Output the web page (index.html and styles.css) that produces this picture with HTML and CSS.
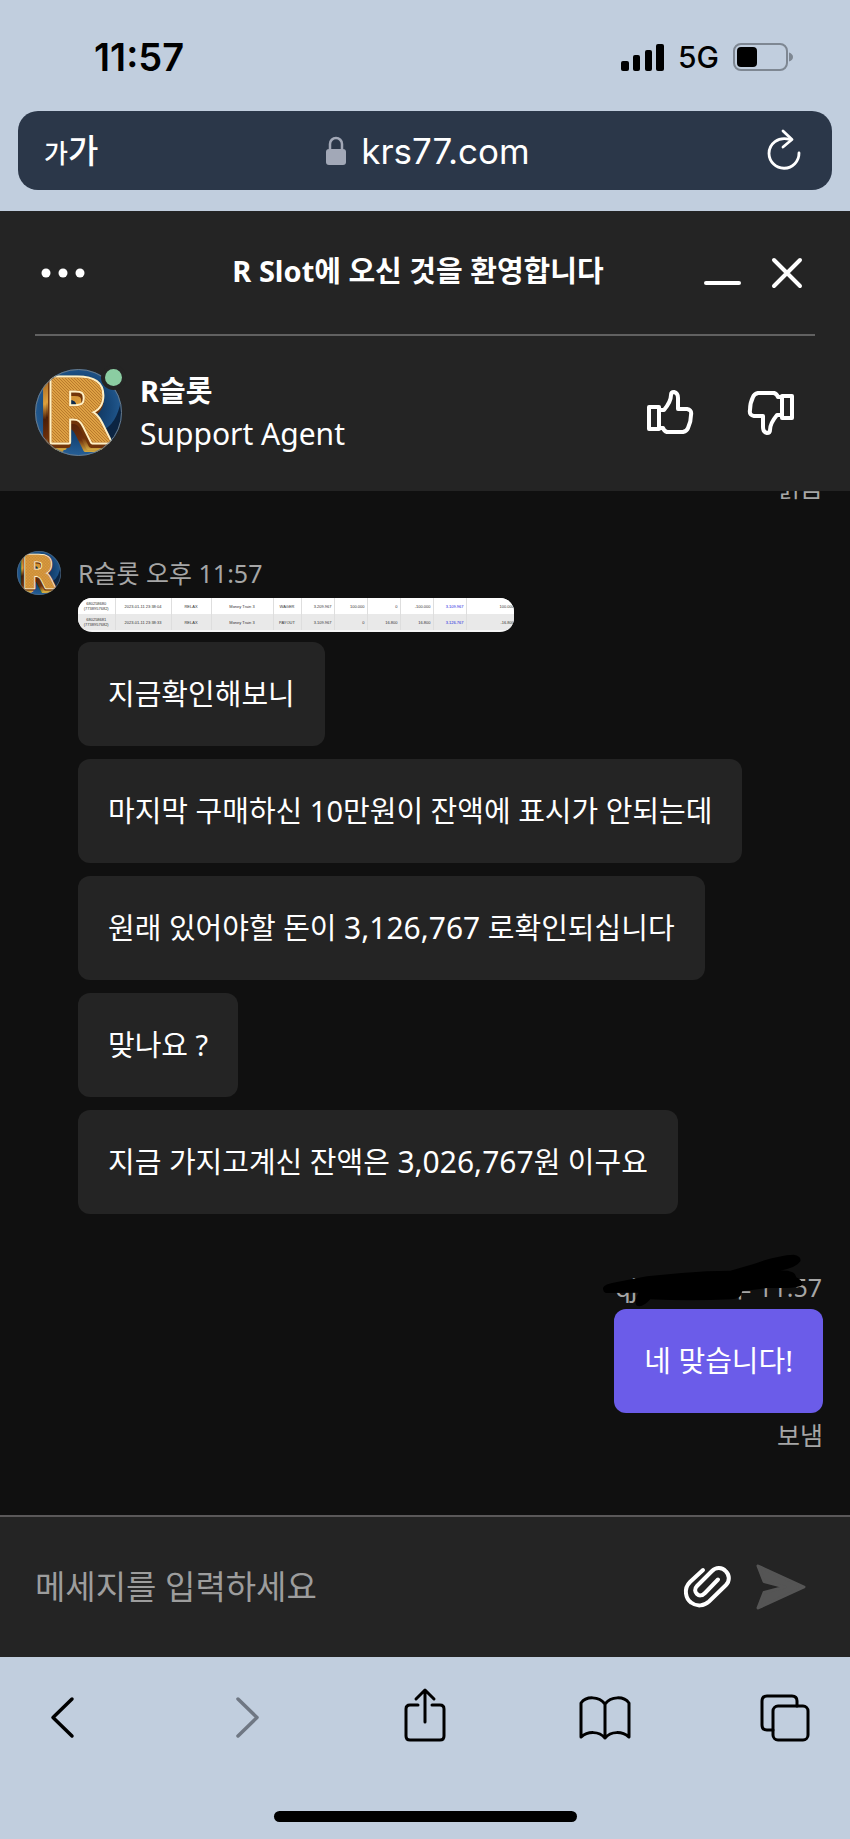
FILE: index.html
```html
<!DOCTYPE html>
<html lang="ko">
<head>
<meta charset="utf-8">
<meta name="viewport" content="width=device-width, initial-scale=1">
<title>R Slot</title>
<link rel="stylesheet" href="styles.css">
</head>
<body>
<svg class="defs" width="0" height="0" aria-hidden="true">
  <defs>
    <radialGradient id="sky" cx="50%" cy="45%" r="60%"><stop offset="0" stop-color="#0b2340"/><stop offset=".6" stop-color="#174778"/><stop offset="1" stop-color="#2a66a0"/></radialGradient>
    <linearGradient id="side" x1="0" y1="0" x2="0" y2="1"><stop offset="0" stop-color="#8a4a14"/><stop offset=".35" stop-color="#dfa03c"/><stop offset=".5" stop-color="#4a1e08"/><stop offset=".7" stop-color="#6e300c"/><stop offset=".85" stop-color="#f2cf52"/><stop offset="1" stop-color="#8a5212"/></linearGradient>
    <pattern id="mesh" width="3" height="3" patternUnits="userSpaceOnUse"><rect width="3" height="3" fill="#dda043"/><path d="M0 0L3 3" stroke="#b97a2c" stroke-width="1"/></pattern>
    <clipPath id="disc"><circle cx="43.5" cy="43.5" r="43.5"/></clipPath>
    <symbol id="logo" viewBox="0 0 87 87">
      <g clip-path="url(#disc)">
        <rect width="87" height="87" fill="url(#sky)"/>
        <path d="M64 87L87 87V24Q84 52 70 60Z" fill="#0b2442"/>
        <g class="logo-letter">
          <text x="2" y="81" fill="url(#side)" stroke="url(#side)" stroke-width="4">R</text>
          <text x="5" y="79" fill="url(#side)" stroke="url(#side)" stroke-width="4">R</text>
          <text x="8" y="76" fill="#713409" stroke="#713409" stroke-width="6">R</text>
          <text x="9" y="73" fill="#fff0c4" stroke="#fff0c4" stroke-width="5">R</text>
          <text x="9" y="73" fill="url(#mesh)" stroke="#b87324" stroke-width="1">R</text>
        </g>
      </g>
      <circle cx="43.5" cy="43.5" r="43" fill="none" stroke="#6a7a88" stroke-width="1"/>
    </symbol>
    <symbol id="thumb" viewBox="0 0 47 45">
      <g fill="none" stroke="#fff" stroke-width="4" stroke-linejoin="round" stroke-linecap="round">
        <path d="M2 17H12V39H2Z"/>
        <path d="M13 20H17C22 14 24 10 24 5Q24 2 27 2Q31 3 31 8V19H40Q45 20 44 25Q44 32 41 38Q40 41 36 42H20Q17 41 16 38H13"/>
      </g>
    </symbol>
  </defs>
</svg>

<header class="phone-top">
  <div class="status">
    <time class="clock">11:57</time>
    <div class="signals">
      <svg width="43" height="27" viewBox="0 0 43 27" role="img" aria-label="신호"><rect y="17" width="8" height="10" rx="2"/><rect x="12" y="11" width="7" height="16" rx="2"/><rect x="24" y="6" width="7" height="21" rx="2"/><rect x="35" width="8" height="27" rx="2"/></svg>
      <span class="network">5G</span>
      <svg width="60" height="28" viewBox="0 0 60 28" role="img" aria-label="배터리"><rect x="1" y="1" width="53" height="26" rx="7" fill="none" stroke="#7e8792" stroke-width="2"/><rect x="4" y="4" width="20" height="20" rx="4"/><path d="M56 9.500Q60 11 60 14T56 18.500Z" fill="#7e8792"/></svg>
    </div>
  </div>
  <div class="address">
    <button class="text-size" aria-label="글자 크기"><span class="small-ga">가</span><span class="big-ga">가</span></button>
    <a class="site" href="#"><svg width="20" height="28" viewBox="0 0 20 28"><path d="M4 12V7A6 6 0 0 1 16 7V12" fill="none" stroke="#a2a8b7" stroke-width="2.500"/><rect y="12" width="20" height="16" rx="3" fill="#a2a8b7"/></svg>krs77.com</a>
    <button class="reload" aria-label="새로고침"><svg width="34" height="40" viewBox="0 0 34 40" fill="none" stroke="#fff" stroke-width="2.800" stroke-linecap="round" stroke-linejoin="round"><path d="M23 8.500C11 5 2 13 2 22.500A15 15 0 0 0 32 22"/><path d="M16 0L25 8.500L16 16"/></svg></button>
  </div>
</header>

<main class="chat">
  <section class="chat-head">
    <div class="title-bar">
      <button class="menu" aria-label="메뉴"><svg width="56" height="12" viewBox="0 0 56 12" fill="#fff"><circle cx="11" cy="6" r="4.500"/><circle cx="28" cy="6" r="4.500"/><circle cx="45" cy="6" r="4.500"/></svg></button>
      <h1>R Slot에 오신 것을 환영합니다</h1>
      <div class="window-buttons">
        <button aria-label="최소화"><svg width="38" height="32" viewBox="0 0 38 32" stroke="#fff" stroke-width="4" stroke-linecap="round"><path d="M3 26H36"/></svg></button>
        <button aria-label="닫기"><svg width="32" height="32" viewBox="0 0 32 32" stroke="#fff" stroke-width="4" stroke-linecap="round"><path d="M3 3L29 29M29 3L3 29"/></svg></button>
      </div>
    </div>
    <div class="agent">
      <div class="portrait"><svg width="87" height="87" role="img" aria-label="R슬롯"><use href="#logo"/></svg><span class="online"></span></div>
      <div class="agent-text"><strong>R슬롯</strong><span class="role">Support Agent</span></div>
      <div class="rating">
        <button aria-label="좋아요"><svg width="47" height="45"><use href="#thumb"/></svg></button>
        <button aria-label="싫어요"><svg width="47" height="45" viewBox="0 0 47 45"><g transform="rotate(180 23.500 22.500)"><use href="#thumb" width="47" height="45"/></g></svg></button>
      </div>
    </div>
  </section>

  <section class="messages">
    <p class="receipt earlier">읽음</p>
    <div class="incoming">
      <svg class="mini-portrait" width="44" height="44" role="img" aria-label="R슬롯"><use href="#logo"/></svg>
      <div class="stack">
        <p class="meta">R슬롯 오후 11:57</p>
        <div class="attachment">
          <table>
            <colgroup><col class="c-id"><col class="c-date"><col class="c-vendor"><col class="c-game"><col class="c-type"><col class="c-num"><col class="c-num"><col class="c-num"><col class="c-num"><col class="c-num"><col></colgroup>
            <tr><td>680258680<br>(7738957682)</td><td>2023-01-11 23:38:04</td><td>RELAX</td><td>Money Train 3</td><td>WAGER</td><td class="n">3.209.967</td><td class="n">100.000</td><td class="n">0</td><td class="n">-100.000</td><td class="n balance">3.109.967</td><td class="n last">100.000</td></tr>
            <tr><td>680258681<br>(7738957682)</td><td>2023-01-11 23:38:33</td><td>RELAX</td><td>Money Train 3</td><td>PAYOUT</td><td class="n">3.109.967</td><td class="n">0</td><td class="n">16.800</td><td class="n">16.800</td><td class="n balance">3.126.767</td><td class="n last">-16.800</td></tr>
          </table>
        </div>
        <p class="bubble">지금확인해보니</p>
        <p class="bubble">마지막 구매하신 10만원이 잔액에 표시가 안되는데</p>
        <p class="bubble">원래 있어야할 돈이 <span class="amount">3,126,767</span> 로확인되십니다</p>
        <p class="bubble">맞나요 ?</p>
        <p class="bubble">지금 가지고계신 잔액은 <span class="amount">3,026,767</span>원 이구요</p>
      </div>
    </div>
    <div class="outgoing">
      <div class="meta redacted"><span>qj</span><span>오후 11:57</span>
        <svg class="scribble" width="201" height="55" viewBox="65 35 603 165"><path d="M68 140Q70 128 110 122L200 105Q290 95 380 90L450 88L520 68Q590 42 640 40Q664 44 660 60Q650 78 600 88Q646 86 648 108Q668 118 665 130Q662 142 560 140L485 150Q486 172 450 174Q330 180 210 174Q185 202 168 192Q160 175 175 154L80 155Q68 155 68 140Z"/></svg>
      </div>
      <p class="bubble mine">네 맞습니다!</p>
      <p class="receipt">보냄</p>
    </div>
  </section>

  <form class="composer">
    <input type="text" aria-label="메세지" placeholder="메세지를 입력하세요">
    <button type="button" aria-label="파일 첨부"><svg width="47" height="42" viewBox="0 0 47 42" fill="none" stroke="#fff" stroke-width="4" stroke-linecap="round"><path d="M19 4L6 16C-1 23 2 33 7 36.500C13 41 20 40 25 35.500L42 19C46 15 45.500 9 42 5.500C38 1 32 1 28 5L13 20C10 23 11 26 13 28C15 30 18 30 21 27L34 13.500"/></svg></button>
    <button type="button" aria-label="보내기"><svg width="52" height="48" viewBox="0 0 52 48"><path d="M3 3L49 24L3 45L9 29.500L30 24L9 18.500Z" fill="#555" stroke="#555" stroke-width="3" stroke-linejoin="round"/></svg></button>
  </form>
</main>

<footer class="phone-bottom">
  <nav class="browser-nav">
    <button aria-label="뒤로"><svg viewBox="0 0 52 52"><path d="M33 8L14 26.500L33 45" stroke-width="3.500"/></svg></button>
    <button class="dim" aria-label="앞으로"><svg viewBox="0 0 52 52"><path d="M19 8L38 26.500L19 45" stroke-width="3.500"/></svg></button>
    <button aria-label="공유"><svg viewBox="0 0 52 52"><path d="M19 14H11Q7 14 7 18V45Q7 49 11 49H41Q45 49 45 45V18Q45 14 41 14H33M26 31V1M17 8L26 -1L35 8"/></svg></button>
    <button aria-label="책갈피"><svg viewBox="0 0 52 52"><path d="M26 13C20 5 7 5 2 12V46C9 40 20 40 26 47C32 40 43 40 50 46V12C45 5 32 5 26 13V47"/></svg></button>
    <button aria-label="탭"><svg viewBox="0 0 52 52"><rect x="14" y="15" width="35" height="34" rx="5"/><path d="M14 39H8Q3 39 3 34V10Q3 5 8 5H33Q38 5 38 10V15"/></svg></button>
  </nav>
  <div class="home-bar"></div>
</footer>
</body>
</html>
```
FILE: styles.css
```css
* { box-sizing: border-box; }

body {
  margin: 0;
  min-height: 100vh;
  display: flex;
  flex-direction: column;
  background: #c1cede;
  font-family: "Noto Sans", "Noto Sans CJK KR", sans-serif;
  font-size: 29px;
}

p, h1 { margin: 0; }
button { padding: 0; border: 0; background: none; color: inherit; font: inherit; display: flex; align-items: center; }
svg { display: block; flex: none; overflow: visible; }
.defs { position: absolute; }
.logo-letter { font-family: "DejaVu Sans", sans-serif; font-weight: 700; font-size: 88px; stroke-linejoin: round; paint-order: stroke; }

/* Phone status and address bar */
.phone-top { padding: 0 18px 21px; color: #000; font-family: Inter, "Noto Sans CJK KR", sans-serif; }
.status { height: 111px; padding: 3px 39px 0 76px; display: flex; align-items: center; justify-content: space-between; }
.clock { font-size: 38px; font-weight: 600; line-height: 46px; }
.signals { display: flex; align-items: center; gap: 14px; }
.network { font-size: 30px; font-weight: 500; line-height: 30px; }
.address { height: 79px; padding: 0 26px; border-radius: 20px; background: #2b3749; color: #fff; display: grid; grid-template-columns: 1fr auto 1fr; align-items: center; }
.text-size { align-items: baseline; font-family: "Noto Sans CJK KR", sans-serif; font-weight: 500; line-height: 40px; }
.small-ga { font-size: 26px; }
.big-ga { font-size: 33px; }
.site { padding-left: 6px; display: flex; align-items: center; gap: 15px; color: inherit; text-decoration: none; font-size: 35px; line-height: 40px; }
.reload { justify-self: end; padding-right: 5px; }

/* Chat header */
.chat { flex: 1; display: flex; flex-direction: column; background: #101010; color: #fff; }
.chat-head { padding: 0 35px; background: #242424; }
.title-bar { height: 125px; border-bottom: 2px solid #616161; display: flex; align-items: center; justify-content: space-between; }
.menu { width: 98px; }
.title-bar h1 { flex: 1; padding-bottom: 4px; text-align: center; font-size: 29px; font-weight: 700; line-height: 40px; }
.window-buttons { width: 112px; padding-right: 12px; display: flex; justify-content: space-between; }
.agent { height: 155px; padding-bottom: 3px; display: flex; align-items: center; gap: 18px; }
.portrait { position: relative; }
.online { position: absolute; top: 0; right: 0; width: 17px; height: 17px; border-radius: 50%; background: #8bcda2; box-shadow: 0 0 0 4px #242424; }
.agent-text { flex: 1; display: flex; flex-direction: column; line-height: 43px; }
.role { font-size: 30px; }
.rating { padding-right: 21px; display: flex; gap: 53px; }

/* Conversation */
.messages { flex: 1; padding: 0 27px 0 17px; overflow: hidden; }
.meta, .receipt { color: #a6a6a6; font-size: 25px; line-height: 44px; }
.earlier { margin-top: -26px; text-align: right; }
.incoming { margin-top: 42px; display: flex; align-items: flex-start; gap: 17px; }
.stack { display: flex; flex-direction: column; align-items: flex-start; gap: 13px; min-width: 0; }
.stack .meta { margin-bottom: -10px; }
.bubble { padding: 30px; border-radius: 12px; background: #242424; line-height: 44px; }
.amount { font-size: 30px; }
.mine { background: #6b5ce9; }
.outgoing { width: fit-content; margin: 51px 0 0 auto; }
.outgoing .receipt { text-align: right; }
.redacted { position: relative; display: flex; justify-content: space-between; padding: 0 1px; }
.scribble { position: absolute; left: -12px; top: -12px; }

.attachment { width: 436px; max-width: 100%; height: 34px; margin-bottom: -3px; border-radius: 14px; overflow: hidden; background: #f6f6f6; }
.attachment table { width: 436px; table-layout: fixed; border-collapse: collapse; font-family: "Liberation Sans", sans-serif; font-size: 4px; line-height: 5px; color: #333; }
.attachment tr { height: 16px; background: #fff; }
.attachment tr + tr { background: #e9e9e9; }
.attachment td { padding: 0 2px; border-right: 1px solid #dedede; text-align: center; white-space: nowrap; }
.attachment .n { text-align: right; }
.attachment .balance { color: #2020e0; }
.attachment .last { padding: 0; border: 0; }
.c-id { width: 37px; }
.c-date { width: 56px; }
.c-vendor { width: 40px; }
.c-game { width: 62px; }
.c-type { width: 28px; }
.c-num { width: 33px; }

/* Message field */
.composer { height: 142px; padding: 0 43px 0 35px; border-top: 2px solid #5a5859; background: #242424; display: flex; align-items: center; gap: 24px; }
.composer input { flex: 1; min-width: 0; padding: 0; border: 0; outline: 0; background: none; color: #fff; font: inherit; font-size: 33px; line-height: 48px; }
.composer input::placeholder { color: #9d9d9d; opacity: 1; }

/* Browser toolbar */
.phone-bottom { height: 182px; padding: 34px 39px 17px; display: flex; flex-direction: column; align-items: center; justify-content: space-between; }
.browser-nav { width: 100%; display: flex; justify-content: space-between; }
.browser-nav svg { width: 52px; height: 52px; fill: none; stroke: #000; stroke-width: 3; stroke-linecap: round; stroke-linejoin: round; }
.browser-nav .dim svg { stroke: #6f7783; }
.home-bar { width: 303px; height: 11px; border-radius: 6px; background: #000; }
```
